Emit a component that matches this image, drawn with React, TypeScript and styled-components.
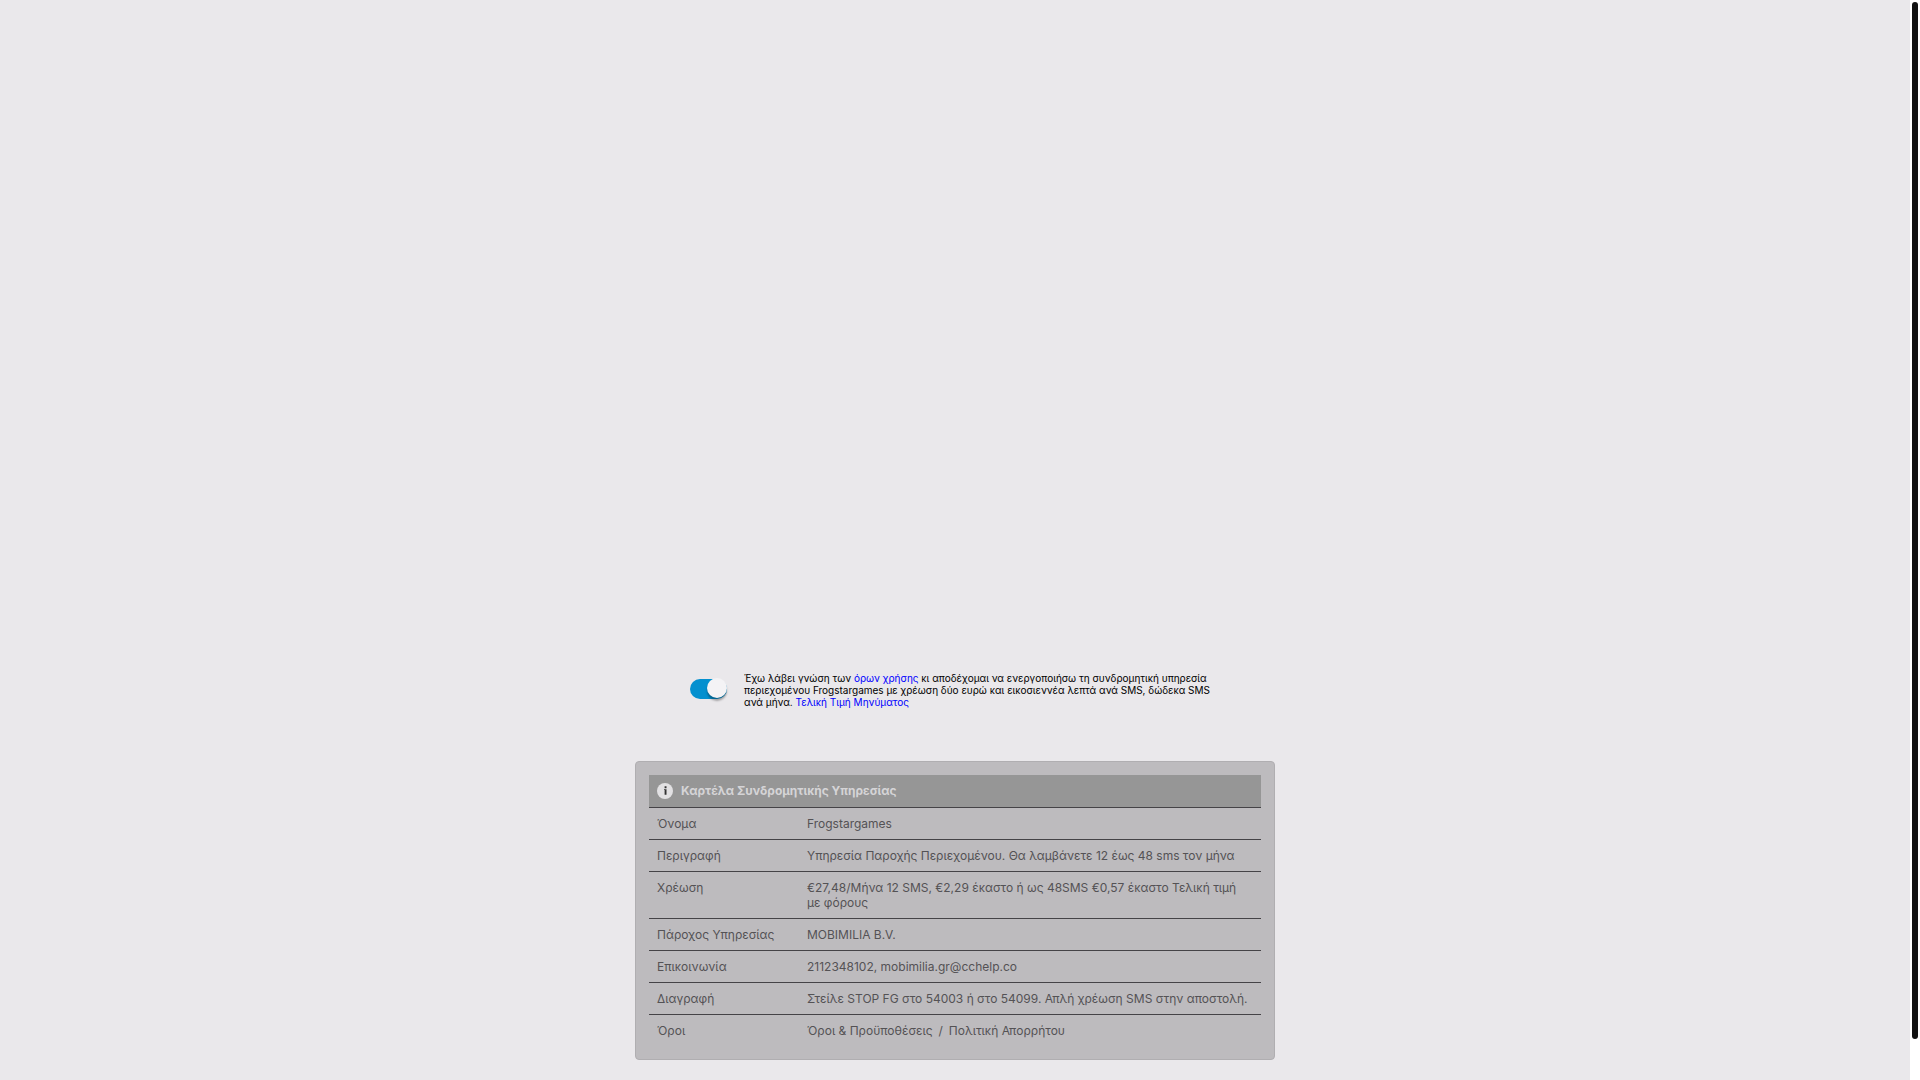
import React, { useState } from "react";
import styled, { createGlobalStyle } from "styled-components";

const GlobalStyle = createGlobalStyle`
  *, *::before, *::after { box-sizing: border-box; }
  body {
    margin: 0;
    background: #fff;
    font-family: Inter, "Liberation Sans", sans-serif;
    text-rendering: optimizeSpeed;
  }
`;

const Page = styled.div`
  display: flex;
  min-height: 100vh;
`;

const Content = styled.main`
  flex: 1;
  display: flex;
  flex-direction: column;
  align-items: center;
  justify-content: flex-end;
  gap: 53px;
  padding: 20px 0;
  background: #eae8eb;
`;

const ScrollTrack = styled.div`
  display: flex;
  width: 10px;
  padding: 2px 2px 41px;
  background: #fff;
`;

const ScrollThumb = styled.div`
  flex: 1;
  border-radius: 3px;
  background: #111;
`;

const Consent = styled.div`
  display: flex;
  align-items: center;
  gap: 17px;
  width: 100%;
  max-width: 530px;
`;

const Switch = styled.input`
  appearance: none;
  flex: none;
  display: flex;
  align-items: flex-end;
  width: 37px;
  height: 20px;
  margin: 0;
  border-radius: 10px;
  background: ${(p) => (p.checked ? "#0490cf" : "#aaa")};
  cursor: pointer;

  &::before {
    content: "";
    width: 20px;
    height: 20px;
    margin-left: ${(p) => (p.checked ? "17px" : "0")};
    margin-bottom: 1px;
    border-radius: 50%;
    background: #f4f3f5;
    box-shadow: 0 3px 2px rgba(0, 0, 0, 0.3);
  }
`;

const ConsentText = styled.label`
  flex: 1;
  padding-top: 2px;
  font-size: 10px;
  line-height: 12px;
  color: #000;
`;

const TermsLink = styled.a`
  color: #00f;
  text-decoration: none;
`;

const Panel = styled.section`
  width: 100%;
  max-width: 640px;
  padding: 13px;
  border: 1px solid #b0aeb1;
  border-radius: 4px;
  background: #bdbbbe;
`;

const PanelTitle = styled.h2`
  display: flex;
  align-items: flex-start;
  gap: 8px;
  margin: 0;
  padding: 8px;
  border-bottom: 1px solid #454347;
  background: #969696;
  color: #d5d4d6;
  font-size: 12px;
  line-height: 15px;
  font-weight: 700;
`;

const Details = styled.table`
  width: 100%;
  border-spacing: 0;
  table-layout: fixed;
  font-size: 12px;
  line-height: 15px;
  color: #545255;
`;

const Row = styled.tr`
  &:not(:last-child) > * {
    border-bottom: 1px solid #454347;
  }
`;

const Name = styled.th`
  width: 150px;
  padding: 8px;
  font-weight: 400;
  text-align: left;
  vertical-align: top;
`;

const Value = styled.td`
  padding: 8px 12px 8px 8px;
  vertical-align: top;
`;

const DetailLink = styled.a`
  color: inherit;
  text-decoration: none;
`;

const Divider = styled.span`
  margin: 0 6px;
`;

const InfoIcon = () => (
  <svg width="16" height="16" viewBox="0 0 16 16" aria-hidden="true">
    <circle cx="8" cy="8" r="8" fill="#e2e1e3" />
    <path d="M7.6 3.3h1.9v1.9H7.6zM7 6.2h2.5v5.6H7.6V7.1H7z" fill="#333" />
  </svg>
);

const rows: { name: string; value: React.ReactNode }[] = [
  { name: "Όνομα", value: "Frogstargames" },
  { name: "Περιγραφή", value: "Υπηρεσία Παροχής Περιεχομένου. Θα λαμβάνετε 12 έως 48 sms τον μήνα" },
  { name: "Χρέωση", value: "€27,48/Μήνα 12 SMS, €2,29 έκαστο ή ως 48SMS €0,57 έκαστο Τελική τιμή με φόρους" },
  { name: "Πάροχος Υπηρεσίας", value: "MOBIMILIA B.V." },
  { name: "Επικοινωνία", value: "2112348102, mobimilia.gr@cchelp.co" },
  { name: "Διαγραφή", value: "Στείλε STOP FG στο 54003 ή στο 54099. Απλή χρέωση SMS στην αποστολή." },
  {
    name: "Όροι",
    value: (
      <>
        <DetailLink href="#terms">Όροι &amp; Προϋποθέσεις</DetailLink>
        <Divider>/</Divider>
        <DetailLink href="#privacy">Πολιτική Απορρήτου</DetailLink>
      </>
    ),
  },
];

export default function App() {
  const [accepted, setAccepted] = useState(true);
  return (
    <Page>
      <GlobalStyle />
      <Content>
        <Consent>
          <Switch
            id="accept"
            type="checkbox"
            checked={accepted}
            onChange={(e) => setAccepted(e.target.checked)}
          />
          <ConsentText htmlFor="accept">
            Έχω λάβει γνώση των <TermsLink href="#terms">όρων χρήσης</TermsLink> κι αποδέχομαι να
            ενεργοποιήσω τη συνδρομητική υπηρεσία περιεχομένου Frogstargames με χρέωση δύο ευρώ και
            εικοσιεννέα λεπτά ανά SMS, δώδεκα SMS ανά μήνα.{" "}
            <TermsLink href="#price">Τελική Τιμή Μηνύματος</TermsLink>
          </ConsentText>
        </Consent>
        <Panel>
          <PanelTitle>
            <InfoIcon />
            Καρτέλα Συνδρομητικής Υπηρεσίας
          </PanelTitle>
          <Details>
            <tbody>
              {rows.map((row) => (
                <Row key={row.name}>
                  <Name scope="row">{row.name}</Name>
                  <Value>{row.value}</Value>
                </Row>
              ))}
            </tbody>
          </Details>
        </Panel>
      </Content>
      <ScrollTrack>
        <ScrollThumb />
      </ScrollTrack>
    </Page>
  );
}
